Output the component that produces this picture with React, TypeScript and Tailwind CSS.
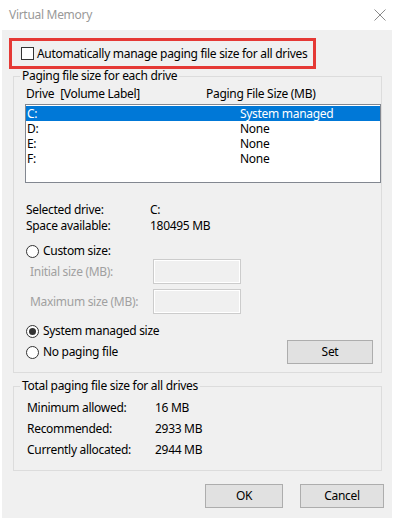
import { useState } from "react";

type Drive = { letter: string; size: string };

const drives: Drive[] = [
  { letter: "C:", size: "System managed" },
  { letter: "D:", size: "None" },
  { letter: "E:", size: "None" },
  { letter: "F:", size: "None" },
];

function Radio({ checked, label }: { checked?: boolean; label: string }) {
  return (
    <div className="flex h-[16px] items-center">
      <span className="flex h-[13px] w-[13px] items-center justify-center rounded-full border border-[#333333] bg-white">
        {checked && <span className="h-[7px] w-[7px] rounded-full bg-[#333333]" />}
      </span>
      <span className="ml-[4px] leading-[16px]">{label}</span>
    </div>
  );
}

function Button({ label, w = "w-[78px]" }: { label: string; w?: string }) {
  return (
    <button
      className={`flex h-[24px] ${w} items-center justify-center border border-[#adadad] bg-[#e1e1e1] leading-[16px] text-black`}
    >
      {label}
    </button>
  );
}

function Field({ label }: { label: string }) {
  return (
    <div className="flex h-[25px] items-center">
      <span className="w-[128px] pl-[5px] leading-[16px] text-[#a0a0a0]">{label}</span>
      <div className="h-[25px] w-[88px] border border-[#cccccc] bg-[#f0f0f0] shadow-[inset_0_0_0_1px_#ffffff]" />
    </div>
  );
}

export default function App() {
  const [selected, setSelected] = useState(0);

  return (
    <div className="flex h-[520px] w-[394px] flex-col bg-white font-['Noto_Sans',sans-serif] text-[12px] tracking-[-0.3px] text-black">
      {/* title bar */}
      <div className="flex h-[30px] items-center justify-between pl-[9px] pr-[8px]">
        <span className="leading-[16px] text-[#999999]">Virtual Memory</span>
        <svg width="12" height="12" viewBox="0 0 12 12" className="mt-[-1px]">
          <path d="M0.5 0.5 L11.5 11.5 M11.5 0.5 L0.5 11.5" stroke="#8a8a8a" strokeWidth="1" />
        </svg>
      </div>

      <div className="mx-[2px] mb-[2px] flex flex-1 flex-col bg-[#f0f0f0]">
        {/* highlighted checkbox */}
        <div className="ml-[7px] mt-[8px] flex h-[31px] w-[307px] items-center border-[3px] border-[#e53935] pl-[9px]">
          <span className="h-[13px] w-[13px] shrink-0 border border-[#333333] bg-white" />
          <span className="ml-[3px] whitespace-nowrap leading-[16px]">
            Automatically manage paging file size for all drives
          </span>
        </div>

        {/* paging file size for each drive */}
        <fieldset className="ml-[11px] w-[369px] border border-[#dcdcdc]">
          <legend className="ml-[6px] px-[2px] leading-[14px]">Paging file size for each drive</legend>
          <div className="pb-[8px] pl-[11px]">
            <div className="mt-[3px] flex h-[15px] items-center pl-[1px] leading-[15px]">
              <span className="w-[180px]">
                Drive<span className="ml-[6px]">[Volume Label]</span>
              </span>
              <span>Paging File Size (MB)</span>
            </div>

            <div className="mt-[3px] h-[79px] w-[356px] border border-[#828790] bg-white pt-[1px]">
              {drives.map((d, i) => (
                <div
                  key={d.letter}
                  onClick={() => setSelected(i)}
                  className={`flex h-[15px] items-center leading-[15px] ${
                    i === selected ? "bg-[#0078d7] text-white" : ""
                  }`}
                >
                  <span className="w-[214px] pl-[1px]">{d.letter}</span>
                  <span>{d.size}</span>
                </div>
              ))}
            </div>

            <div className="mt-[19px] flex h-[16px] items-center pl-[1px] leading-[16px]">
              <span className="w-[124px]">Selected drive:</span>
              <span>C:</span>
            </div>
            <div className="flex h-[16px] items-center pl-[1px] leading-[16px]">
              <span className="w-[124px]">Space available:</span>
              <span>180495 MB</span>
            </div>

            <div className="mt-[9px] pl-[1px]">
              <Radio label="Custom size:" />
            </div>
            <Field label="Initial size (MB):" />
            <div className="mt-[5px]">
              <Field label="Maximum size (MB):" />
            </div>

            <div className="mt-[9px] pl-[1px]">
              <Radio checked label="System managed size" />
            </div>
            <div className="mt-[1px] flex h-[24px] items-center justify-between pl-[1px] pr-[8px]">
              <Radio label="No paging file" />
              <Button label="Set" w="w-[86px]" />
            </div>
          </div>
        </fieldset>

        {/* totals */}
        <fieldset className="ml-[11px] mt-[6px] w-[369px] border border-[#dcdcdc]">
          <legend className="ml-[6px] px-[2px] leading-[14px]">Total paging file size for all drives</legend>
          <div className="flex flex-col gap-[5px] pb-[12px] pl-[13px] pt-[7px]">
            <div className="flex h-[16px] items-center leading-[16px]">
              <span className="w-[128px]">Minimum allowed:</span>
              <span>16 MB</span>
            </div>
            <div className="flex h-[16px] items-center leading-[16px]">
              <span className="w-[128px]">Recommended:</span>
              <span>2933 MB</span>
            </div>
            <div className="flex h-[16px] items-center leading-[16px]">
              <span className="w-[128px]">Currently allocated:</span>
              <span>2944 MB</span>
            </div>
          </div>
        </fieldset>

        <div className="ml-[203px] mt-[13px] flex gap-[17px]">
          <Button label="OK" />
          <Button label="Cancel" w="w-[84px]" />
        </div>
      </div>
    </div>
  );
}
